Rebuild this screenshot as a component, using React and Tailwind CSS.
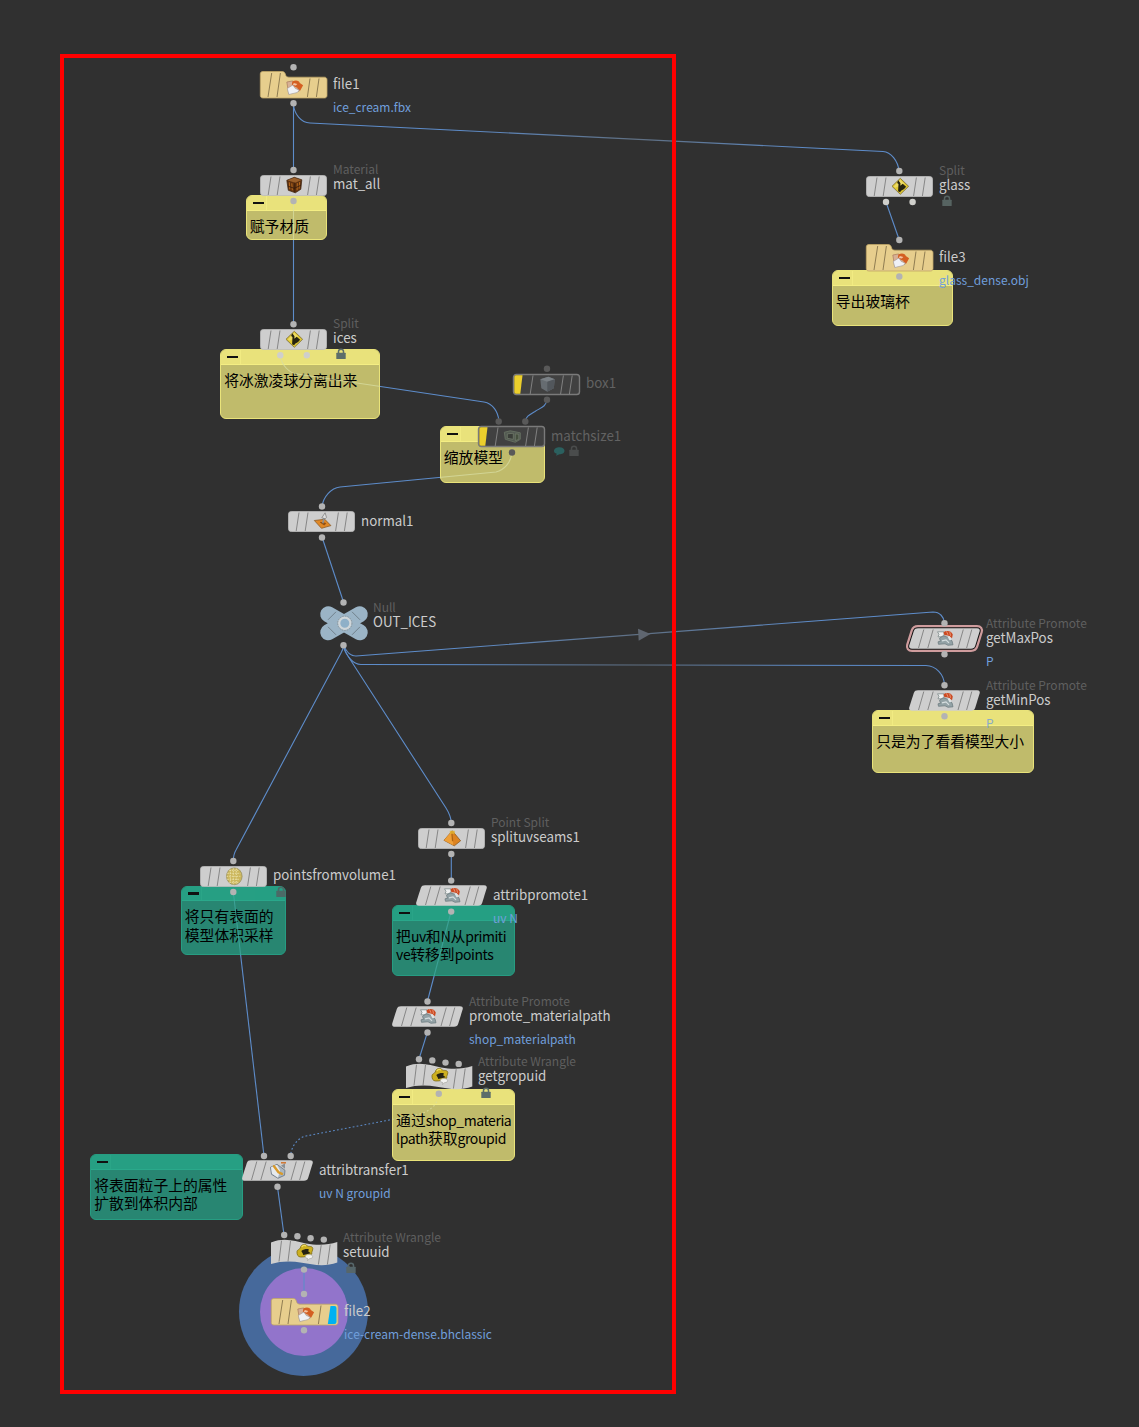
import React from "react";

const WIRES = [
  { d: "M293.5 103V170" },
  {
    d: "M293.5 104C294 114 301 122.5 310 123L883 151.5C891 152 898 161 899 171",
    long: true,
  },
  { d: "M293.5 201V325" },
  { d: "M886 202L899.3 240" },
  { d: "M280.5 356C281.5 365 289 373 297 374L484 402C493 403.5 498 412 499 421" },
  { d: "M547 400C546 407 540 408 535 411.5C530 414.5 526 416 525.5 421" },
  { d: "M512 452C511 463 504 470 496 472L340 487C331 488 323 497 322 507" },
  { d: "M322 537L343.5 602" },
  {
    d: "M343.5 645C346 651 349 656 356 656L933 612C940 612 944 617 944.5 623",
    long: true,
  },
  {
    d: "M343.5 645C346 656 353 664.5 361 664.5L926 665.5C936 666 944 674 944.5 685",
    long: true,
  },
  { d: "M343.5 645Q343 650 341 653L236 850Q233.5 854 233.3 861" },
  { d: "M343.5 645Q344 650 346 653L446 808Q451 816 451.3 823" },
  { d: "M233.3 892L264 1156" },
  { d: "M451.3 854V881" },
  { d: "M451 912L427.5 1001" },
  { d: "M427.5 1032L419 1059" },
  {
    d: "M438.7 1094C438 1106 428 1112 418 1114.5L306 1136C297 1138 291 1147 290.7 1156",
    dotted: true,
  },
  { d: "M277.5 1187L284 1235" },
  { d: "M304 1270V1294" },
];

const NOTES = [
  { x: 246, y: 195, w: 81, h: 45, lines: ["赋予材质"] },
  { x: 220.4, y: 349, w: 159.6, h: 70, lines: ["将冰激凌球分离出来"] },
  { x: 440, y: 426.4, w: 105.4, h: 57, lines: ["缩放模型"] },
  { x: 832, y: 270, w: 121, h: 56, lines: ["导出玻璃杯"] },
  { x: 872.4, y: 710, w: 161.5, h: 63.4, lines: ["只是为了看看模型大小"] },
  { x: 181, y: 885.6, w: 105, h: 69.5, green: true, lines: ["将只有表面的", "模型体积采样"] },
  { x: 392.3, y: 905.4, w: 122.3, h: 70.5, green: true, lines: ["把uv和N从primiti", "ve转移到points"] },
  { x: 392.3, y: 1089.4, w: 122.3, h: 72, lines: ["通过shop_materia", "lpath获取groupid"] },
  { x: 90.4, y: 1154, w: 152.5, h: 66.3, green: true, lines: ["将表面粒子上的属性", "扩散到体积内部"] },
];

const NODES = [
  { name: "file1", sub: "ice_cream.fbx", shape: "file", icon: "file", x: 260, y: 71, lx: 333, ly: 89 },
  { name: "mat_all", type: "Material", shape: "bar", icon: "material", x: 260, y: 175, lx: 333, ly: 189 },
  { name: "ices", type: "Split", shape: "bar", icon: "split", x: 260, y: 329, lx: 333, ly: 343.4 },
  { name: "box1", shape: "off", icon: "box", x: 513, y: 373.6, lx: 586, ly: 388 },
  { name: "matchsize1", shape: "off", icon: "match", x: 478.4, y: 426, lx: 551, ly: 441 },
  { name: "normal1", shape: "bar", icon: "normal", x: 288.2, y: 511.2, lx: 361, ly: 526 },
  { name: "OUT_ICES", type: "Null", shape: "null", x: 319.5, y: 606, lx: 373, ly: 626.5 },
  { name: "glass", type: "Split", shape: "bar", icon: "split", x: 866, y: 176, lx: 939, ly: 190 },
  { name: "file3", sub: "glass_dense.obj", shape: "file", icon: "file", x: 866, y: 244, lx: 939, ly: 262 },
  { name: "getMaxPos", type: "Attribute Promote", sub: "P", shape: "skew", icon: "promote", ring: true, x: 909.2, y: 628, lx: 986, ly: 643 },
  { name: "getMinPos", type: "Attribute Promote", sub: "P", faded: true, shape: "skew", icon: "promote", x: 909.2, y: 690, lx: 986, ly: 705 },
  { name: "pointsfromvolume1", shape: "bar", icon: "points", x: 200, y: 865.7, lx: 273, ly: 880 },
  { name: "splituvseams1", type: "Point Split", shape: "bar", icon: "seams", x: 418, y: 828, lx: 491, ly: 842 },
  { name: "attribpromote1", sub: "uv N", shape: "skew", icon: "promote", x: 416, y: 885.4, lx: 493, ly: 900 },
  { name: "promote_materialpath", type: "Attribute Promote", sub: "shop_materialpath", shape: "skew", icon: "promote", x: 392.2, y: 1006.4, lx: 469, ly: 1021 },
  { name: "getgropuid", type: "Attribute Wrangle", shape: "wave", icon: "wrangle", x: 406, y: 1064.4, lx: 478, ly: 1081 },
  { name: "attribtransfer1", sub: "uv N groupid", shape: "skew", icon: "transfer", x: 242.2, y: 1160.4, lx: 319, ly: 1175 },
  { name: "setuuid", type: "Attribute Wrangle", shape: "wave", icon: "wrangle", x: 270.8, y: 1240.4, lx: 343, ly: 1257 },
  { name: "file2", sub: "ice-cream-dense.bhclassic", shape: "file", icon: "file", display: true, x: 270.6, y: 1298, lx: 344, ly: 1316 },
];

const PORTS = [
  [293.5, 67.3], [293.5, 103.3], [293.5, 170], [293.5, 201], [293.5, 324.3],
  [322, 506.5], [322, 537.5], [343.5, 602.5], [343.5, 645.3],
  [899.3, 171], [899.3, 240], [899.3, 276.5],
  [944.5, 623.3], [944.5, 654.2], [944.5, 685.3], [944.5, 716.2],
  [233.3, 861], [233.3, 892], [451.3, 823], [451.3, 854],
  [451.2, 880.6], [451.2, 911.6], [427.5, 1001.5], [427.5, 1032.5],
  [419, 1059.3], [432.3, 1060.4], [445.5, 1062.6], [458.7, 1063.9], [438.8, 1093.7],
  [264, 1156], [290.7, 1156], [277.5, 1186.8],
  [284.2, 1235], [297.4, 1236.2], [310.6, 1238.3], [323.8, 1239.6], [304, 1269.6],
  [304, 1294], [304, 1330.2],
];
const LIGHT_PORTS = [[280.3, 355.3], [306.8, 355.3], [886, 202], [912.6, 202]];
const DIM_PORTS = [[547, 368.8], [547, 399.8], [498.7, 421.5], [525.3, 421.5], [512, 452.5]];

const LOCKS = [
  { x: 341, y: 354.3, cls: "text-[#5c6d6a]" },
  { x: 574, y: 451.3, cls: "text-[#4a4c4c]" },
  { x: 947, y: 201.3, cls: "text-[#566361]" },
  { x: 281, y: 891.5, cls: "text-[#4b6a66]" },
  { x: 486, y: 1092.5, cls: "text-[#5c6d6a]" },
  { x: 350.7, y: 1268.2, cls: "text-[#56666a]" },
];

const Icon = ({ name }) => {
  switch (name) {
    case "file":
      return (
        <g>
          <path d="M-7.5 -5L-2 -6L0 -5L3.5 -5.5L5 4L-5.5 7Z" fill="#d8b095" stroke="#a87a5d" strokeWidth="0.7" />
          <path d="M-2 -5.5C2 -7.5 5 -6 5.5 -4L8.8 -1.8L6 3.5L2.5 3L3.5 1L-2.5 -1.5Z" fill="#d45f22" />
          <path d="M-0.5 -4L3 -3L1.5 -1.5L-1.5 -2Z" fill="#f3c4a3" />
          <path d="M-7 1.5L-1.5 -2L1 1.5L5 3L3 5.5L-5.5 7.5Z" fill="#eff1f5" stroke="#a09a98" strokeWidth="0.6" />
        </g>
      );
    case "material":
      return (
        <g>
          <path d="M-7.5 -5L0 -8L7.5 -5.5L6.5 4L1 7.5L-6 5Z" fill="#5f310f" stroke="#3a1f0b" strokeWidth="0.7" />
          <path d="M-7 -5L0 -7.6L7 -5.4L1 -2.5Z" fill="#9a5f2a" />
          <path d="M-5 -3L-4.5 4M-2.5 -2L-2 5M3 -2.2L2.8 5M5.3 -3.2L4.8 3.4" stroke="#b96a1e" strokeWidth="1" />
          <path d="M0.5 -2.5V7M-6 1L0 3L6.5 0" stroke="#33190a" strokeWidth="0.8" fill="none" />
        </g>
      );
    case "split":
      return (
        <g>
          <path d="M0 -8L8.3 0L0 8L-8.3 0Z" fill="#e0c832" stroke="#83753a" strokeWidth="0.9" strokeLinejoin="round" />
          <path d="M0 -6.5L4 -2.5L-5 1.5L-6.5 0Z" fill="#f1e27c" opacity="0.7" />
          <path d="M-3.2 -3.2L-2 -6L0.2 -3L0 -0.5L2.4 -2.6L5.8 0.4L3.8 2.6L0.8 4.4L-0.2 6L-2.2 5L-1.8 -2.4Z" fill="#25230f" />
        </g>
      );
    case "box":
      return (
        <g>
          <path d="M-7 -5L1 -7.5L7.5 -5L6.5 4L0 7.5L-6 4Z" fill="#666c71" />
          <path d="M-7 -5L1 -7.5L7.5 -5L0 -2.5Z" fill="#7a8085" />
          <path d="M0 -2.5L7.5 -5L6.5 4L0 7.5Z" fill="#52575c" />
        </g>
      );
    case "match":
      return (
        <g>
          <path d="M-8 -4L-2 -5.5L8 -3.5V3L3 6L-7 3Z" fill="#535a52" stroke="#667062" strokeWidth="0.9" />
          <path d="M-5 -2.5L1 -3V3L-5 2Z" fill="#3b3e39" stroke="#76806f" strokeWidth="0.7" />
          <path d="M3 -2.5L6.5 -2V3L3 4.5Z" fill="#46503f" stroke="#76806f" strokeWidth="0.7" />
        </g>
      );
    case "normal":
      return (
        <g>
          <path d="M-8 -0.8L2.5 -2L8.6 4.3L-0.8 7Z" fill="#e08826" stroke="#8d5a24" strokeWidth="0.8" />
          <path d="M-2 1L2 3.8L3.5 2Z" fill="#8d4d10" stroke="#8d4d10" strokeWidth="0.8" />
          <path d="M0.5 2L2 -4" stroke="#8d8d8d" strokeWidth="1.6" />
          <path d="M-0.5 -3.5L2.8 -8.5L4.2 -4L3 -2.5Z" fill="#dedede" stroke="#777" strokeWidth="0.7" />
        </g>
      );
    case "points":
      return (
        <g>
          <ellipse rx="7.8" ry="8.4" fill="#cbb65c" stroke="#99905f" strokeWidth="0.8" />
          <path
            d="M-4 -6.5V6.5M-1 -8V8M2 -7.8V7.8M-7 -3H6M-7.6 0H6M-7 3H5M-5 -6H4M-5 6H4"
            stroke="#ebe2ab"
            strokeWidth="0.9"
            strokeDasharray="1.5 1"
          />
        </g>
      );
    case "seams":
      return (
        <g>
          <path d="M0 -7.5L8.3 2.5L2 7.5L-8.3 2Z" fill="#dc8320" stroke="#8f5b20" strokeWidth="0.8" />
          <path d="M0 -7.5L1 7L-8.3 2Z" fill="#ee9f38" />
          <path d="M-0.5 -7L0.3 3" stroke="#ad6412" strokeWidth="1.3" />
          <path d="M-2.5 -7.5H2.5V-4.5H-2.5Z" fill="#e3b530" opacity="0.8" />
        </g>
      );
    case "promote":
      return (
        <g>
          <path d="M-7.5 -6.5H-1V-2.5L-3 -1.5H-7L-6 -4Z" fill="#f0f1f1" stroke="#7f8c8b" strokeWidth="0.8" />
          <path d="M-5.5 0L-2 -2.5L3 -1L7 2.5L8 6.5L3 7L0 5.5L-6.5 6L-7 3.5L-4.5 3Z" fill="#93a2a6" stroke="#66757a" strokeWidth="0.7" />
          <path d="M-3 2.5L1 1.5L4 4.5" stroke="#d6dee0" strokeWidth="1.2" fill="none" />
          <path d="M-1.5 -5.8C1 -8.2 6.5 -7.5 7.8 -3.8L7 0L4.2 -2.2C3 -3.2 1 -3.2 -0.5 -3Z" fill="#cb4a22" />
          <path d="M1.5 -7L3 -3.5M4.8 -6.3L5.5 -2.5" stroke="#eda183" strokeWidth="0.8" />
          <path d="M2.5 -1.5L4.8 -2L6.5 1.5L4.5 2Z" fill="#dfe5e6" />
        </g>
      );
    case "transfer":
      return (
        <g>
          <path d="M-7.5 -3L-1 -6L7 0L6.5 5L0 8L-6.5 4Z" fill="#aab6c1" stroke="#67717c" strokeWidth="0.8" />
          <path d="M-7 -3L-1 -5.5L2 0L0 7.5L-6 3.5Z" fill="#e6eaed" />
          <path d="M-4 -4L0.5 2L4 3.5" stroke="#d99a2a" strokeWidth="2.4" strokeLinecap="round" />
          <path d="M3 -4.5L7 -7V-1.5Z" fill="#8a9197" />
          <path d="M3 -7.5H8" stroke="#d06f25" strokeWidth="1.4" />
        </g>
      );
    case "wrangle":
      return (
        <g>
          <path d="M-7.8 -0.5C-8 -2 -5 -2.5 -4.5 -4C-4 -8 1 -8.5 2.5 -6C4 -5 7.5 -6.5 8 -3.5C8 -1 6.5 0 7 2C5 4.5 -1 5 -4 5C-7 5 -8 2.5 -7.8 -0.5Z" fill="#cdb020" stroke="#7c6b18" strokeWidth="0.8" />
          <path d="M-3.5 -1C-1 -3 2 -3.2 4 -2.8L3.5 -0.5L6 1.2L-1.5 3L-2.2 1.2Z" fill="#262313" />
          <path d="M-3 -5C-2 -6.5 0 -6.8 1.4 -6" stroke="#efdd62" strokeWidth="1.3" fill="none" />
          <path d="M0.5 4.3C0.5 2.2 7.8 1.8 7.8 4.5C7.8 6.7 5.5 6.4 4.8 6.6L2.8 8.6L3 6.5C1.5 6.4 0.5 5.6 0.5 4.3Z" fill="#f2f2f0" stroke="#93938c" strokeWidth="0.5" />
        </g>
      );
    default:
      return null;
  }
};

const SKEW =
  "M9 0.3H68C70.5 0.3 71.2 1.6 70.6 3.6L66.2 17.8C65.5 20 64.3 20.7 62 20.7H3C0.6 20.7 -0.3 19.4 0.3 17.2L4.8 3C5.5 1 6.8 0.3 9 0.3Z";
const STRIPES = "M8.2 20L11 1.5M17.2 20L20 1.5M47.6 20L50.4 1.5M56.4 20L59.2 1.5";

const Shape = ({ node }) => {
  const { shape, icon } = node;

  if (shape === "null") {
    return (
      <g transform="translate(24 17.3)">
        <path d="M-15.8 -9L15.8 9M-15.8 9L15.8 -9" stroke="#9bb4c6" strokeWidth="16" strokeLinecap="round" />
        <path
          d="M-16 -3.5L-8 -11.5M16 -3.5L8 -11.5M-16 3.5L-8 11.5M16 3.5L8 11.5"
          stroke="#71818c"
          strokeWidth="1"
        />
        <circle cx="0.8" r="5.6" fill="#8fb0c8" stroke="#d0d6d9" strokeWidth="2.2" />
        <circle cx="0.8" r="7.2" fill="none" stroke="#8a8f91" strokeWidth="0.8" strokeDasharray="1.4 1.2" />
      </g>
    );
  }

  if (shape === "file") {
    return (
      <g>
        <path
          d="M3 0.5H22C24 0.5 24.8 1.5 25.3 3C25.8 5.2 27 6.2 29 6.2H64.5C66 6.2 67 7.2 67 8.8V24.5C67 26 66 27 64.5 27H3C1.2 27 0.3 26 0.3 24.5V3C0.3 1.4 1.2 0.5 3 0.5Z"
          fill="#e7ce8d"
          stroke="#c0a667"
          strokeWidth="0.8"
        />
        {node.display && <path d="M59.5 8H63.5Q65.5 8 65.5 10V24Q65.5 26 63.5 26H56.8Z" fill="#00b1f2" />}
        <path
          d={
            node.display
              ? "M8 26L11.7 2M17 26L20.4 2M47.4 26L50 7.5"
              : "M8 26L11.7 2M17 26L20.4 2M47.4 26L50 7.5M56.4 26L59 7.5"
          }
          stroke="#85734b"
          strokeWidth="0.9"
        />
        <g transform="translate(34.3 16)">
          <Icon name={icon} />
        </g>
      </g>
    );
  }

  if (shape === "wave") {
    return (
      <g>
        <path d="M0 2.5C14 -3 24 1.5 35 3.5C47 5.6 57 5 66.3 2V22.5C54 27 42 24.8 31 22.8C20 20.8 10 21 0 24Z" fill="#cecece" />
        <path d="M8 21.5L10.5 0.7M17 21.3L19.5 1M47.4 24.5L50.2 5.2M56.4 24.5L59.2 4.5" stroke="#7e7e7e" strokeWidth="0.9" />
        <g transform="translate(33.8 12)">
          <Icon name={icon} />
        </g>
      </g>
    );
  }

  if (shape === "skew") {
    return (
      <g>
        {node.ring && (
          <>
            <path d={SKEW} fill="none" stroke="#cf9c9d" strokeWidth="6.5" strokeLinejoin="round" />
            <path d={SKEW} fill="none" stroke="#111" strokeWidth="2" />
          </>
        )}
        <path d={SKEW} fill="#cecece" />
        <path d="M9.5 20L14.8 1.5M18.8 20L24.2 1.5M49 20L54.3 1.5M57.6 20L62.8 1.5" stroke="#7e7e7e" strokeWidth="0.9" />
        <g transform="translate(36 10.3)">
          <Icon name={icon} />
        </g>
      </g>
    );
  }

  const off = shape === "off";
  return (
    <g>
      <rect
        x="0.5"
        y="0.5"
        width="66"
        height="20"
        rx="2.8"
        fill={off ? "#414141" : "#cecece"}
        stroke={off ? "#7a7a7a" : "#bdbdbd"}
        strokeWidth={off ? 1.4 : 0.8}
      />
      {off && <path d="M3 1.3H9.5L7.3 19.8H3Q1.3 19.8 1.3 18V3Q1.3 1.3 3 1.3Z" fill="#eccf2c" />}
      <path
        d={off ? "M17.2 20L20 1.5M47.6 20L50.4 1.5M56.4 20L59.2 1.5" : STRIPES}
        stroke={off ? "#888" : "#7e7e7e"}
        strokeWidth="0.9"
      />
      <g transform="translate(34.3 10.3)">
        <Icon name={icon} />
      </g>
    </g>
  );
};

const Node = ({ node }) => (
  <>
    <svg
      className="absolute overflow-visible"
      width="72"
      height="28"
      fill="none"
      style={{ left: node.x, top: node.y }}
    >
      <Shape node={node} />
    </svg>
    <div
      className="absolute flex flex-col whitespace-nowrap"
      style={{ left: node.lx, top: node.ly - 27 }}
    >
      <span className="mb-px h-[14px] text-[12px] leading-[14px] text-[#5f5f5f]">{node.type}</span>
      <span
        className={`h-3 origin-left scale-x-[0.952] text-[14px] leading-3 ${
          node.shape === "off" ? "text-[#626262]" : "text-[#cccccc]"
        }`}
      >
        {node.name}
      </span>
      {node.sub && (
        <span
          className={`mt-[11px] text-[12px] leading-[14px] text-[#719fdc] ${
            node.faded ? "opacity-80" : ""
          }`}
        >
          {node.sub}
        </span>
      )}
    </div>
  </>
);

// Latin runs are set a little tighter than the Chinese around them
const NoteLine = ({ text }) => (
  <div className="h-[18.5px]">
    {text.split(/([\w]+)/).map((part, i) =>
      /^\w+$/.test(part) ? (
        <span key={i} className="text-[14px] tracking-[-0.42px]">
          {part}
        </span>
      ) : (
        part
      )
    )}
  </div>
);

const Note = ({ note }) => (
  <div
    className={`absolute overflow-hidden rounded-[6px] border ${
      note.green ? "border-[#279d82] bg-[#288672]" : "border-[#e9e37a] bg-[#c0bb6b]"
    }`}
    style={{ left: note.x, top: note.y, width: note.w, height: note.h }}
  >
    <div
      className={`h-[14.5px] border-b ${
        note.green ? "border-[#2aa98b] bg-[#269f83]" : "border-[#f4ee83] bg-[#e9e27b]"
      }`}
    >
      <div
        className={`flex h-full w-5 items-center justify-end border-r pr-0.5 ${
          note.green ? "border-[#2aa587]" : "border-[#f1eb82]"
        }`}
      >
        <div className="h-[2.5px] w-[11px] bg-[#111]" />
      </div>
    </div>
    <div className="pt-[6px] pl-[2.8px] text-[14.8px] leading-[18.5px] whitespace-nowrap text-black">
      {note.lines.map((line) => (
        <NoteLine key={line} text={line} />
      ))}
    </div>
  </div>
);

const Wires = () =>
  WIRES.map((wire) => (
    <path
      key={wire.d}
      d={wire.d}
      stroke={wire.long ? "url(#fade)" : "#5d8cca"}
      strokeDasharray={wire.dotted ? "1.8 2.2" : undefined}
    />
  ));

// Parts of the wires that run across a note get a paler tint
const TintedWires = ({ green }) => (
  <g
    clipPath={green ? "url(#greenNotes)" : "url(#yellowNotes)"}
    stroke={green ? "#42aaa2" : "#d8dda2"}
    opacity="0.75"
  >
    {WIRES.map((wire) => (
      <path key={wire.d} d={wire.d} strokeDasharray={wire.dotted ? "1.8 2.2" : undefined} />
    ))}
  </g>
);

const Ports = ({ list, fill }) =>
  list.map(([x, y]) => <circle key={`${x}-${y}`} cx={x} cy={y} r="3.2" fill={fill} />);

const App = () => {
  return (
    <div className="relative h-[1427px] w-[1139px] overflow-hidden bg-[#303030] font-['Noto_Sans_CJK_SC',sans-serif]">
      <div className="absolute top-[1247px] left-[239.4px] size-[129px] rounded-full bg-[#46699b]" />
      <div className="absolute top-[1267.5px] left-[260px] size-[88px] rounded-full bg-[#9274cb]" />

      <svg className="absolute inset-0" width="1139" height="1427" fill="none" strokeWidth="1.1">
        <defs>
          <linearGradient id="fade" gradientUnits="userSpaceOnUse" x1="293" y1="0" x2="945" y2="0">
            <stop offset="0" stopColor="#5d8cca" />
            <stop offset="0.25" stopColor="#5d8cca" />
            <stop offset="0.53" stopColor="#5f6f82" />
            <stop offset="0.8" stopColor="#5d8cca" />
            <stop offset="1" stopColor="#5d8cca" />
          </linearGradient>
        </defs>
        <Wires />
        <path d="M638 628.7L650.5 634L638.7 640.7Z" fill="#5f6670" />
      </svg>

      {NOTES.map((note) => (
        <Note key={note.lines[0]} note={note} />
      ))}

      <svg className="absolute inset-0" width="1139" height="1427" fill="none" strokeWidth="1.1">
        <defs>
          <clipPath id="yellowNotes">
            {NOTES.filter((n) => !n.green).map((n) => (
              <rect key={n.y} x={n.x} y={n.y} width={n.w} height={n.h} />
            ))}
          </clipPath>
          <clipPath id="greenNotes">
            {NOTES.filter((n) => n.green).map((n) => (
              <rect key={n.y} x={n.x} y={n.y} width={n.w} height={n.h} />
            ))}
          </clipPath>
        </defs>
        <TintedWires />
        <TintedWires green />
      </svg>

      {NODES.map((node) => (
        <Node key={node.name} node={node} />
      ))}

      <svg className="absolute inset-0" width="1139" height="1427" fill="none">
        <Ports list={PORTS} fill="#b3b3b3" />
        <Ports list={LIGHT_PORTS} fill="#cfcfcb" />
        <Ports list={DIM_PORTS} fill="#595959" />
        {/* comment bubble */}
        <path
          d="M554 451C554 448.5 556.5 447.2 559.5 447.2C562.5 447.2 564.5 448.8 564.5 450.8C564.5 453.2 562 454.3 559.5 454.3L556 455.8L556.8 453.8C555 453.3 554 452.3 554 451Z"
          fill="#2b605f"
        />
      </svg>

      {LOCKS.map((lock) => (
        <svg
          key={lock.y}
          className={`absolute ${lock.cls}`}
          width="10"
          height="12"
          fill="none"
          style={{ left: lock.x - 5, top: lock.y - 6 }}
        >
          <path d="M2.5 5V3.5C2.5 0.5 7.5 0.5 7.5 3.5V5" stroke="currentColor" strokeWidth="1.5" />
          <rect x="0.3" y="4.8" width="9.4" height="6.2" rx="0.5" fill="currentColor" />
        </svg>
      ))}

      <div className="absolute top-[54px] left-[60px] h-[1339.5px] w-[616px] border-4 border-[#ff0000]" />
    </div>
  );
};

export default App;
